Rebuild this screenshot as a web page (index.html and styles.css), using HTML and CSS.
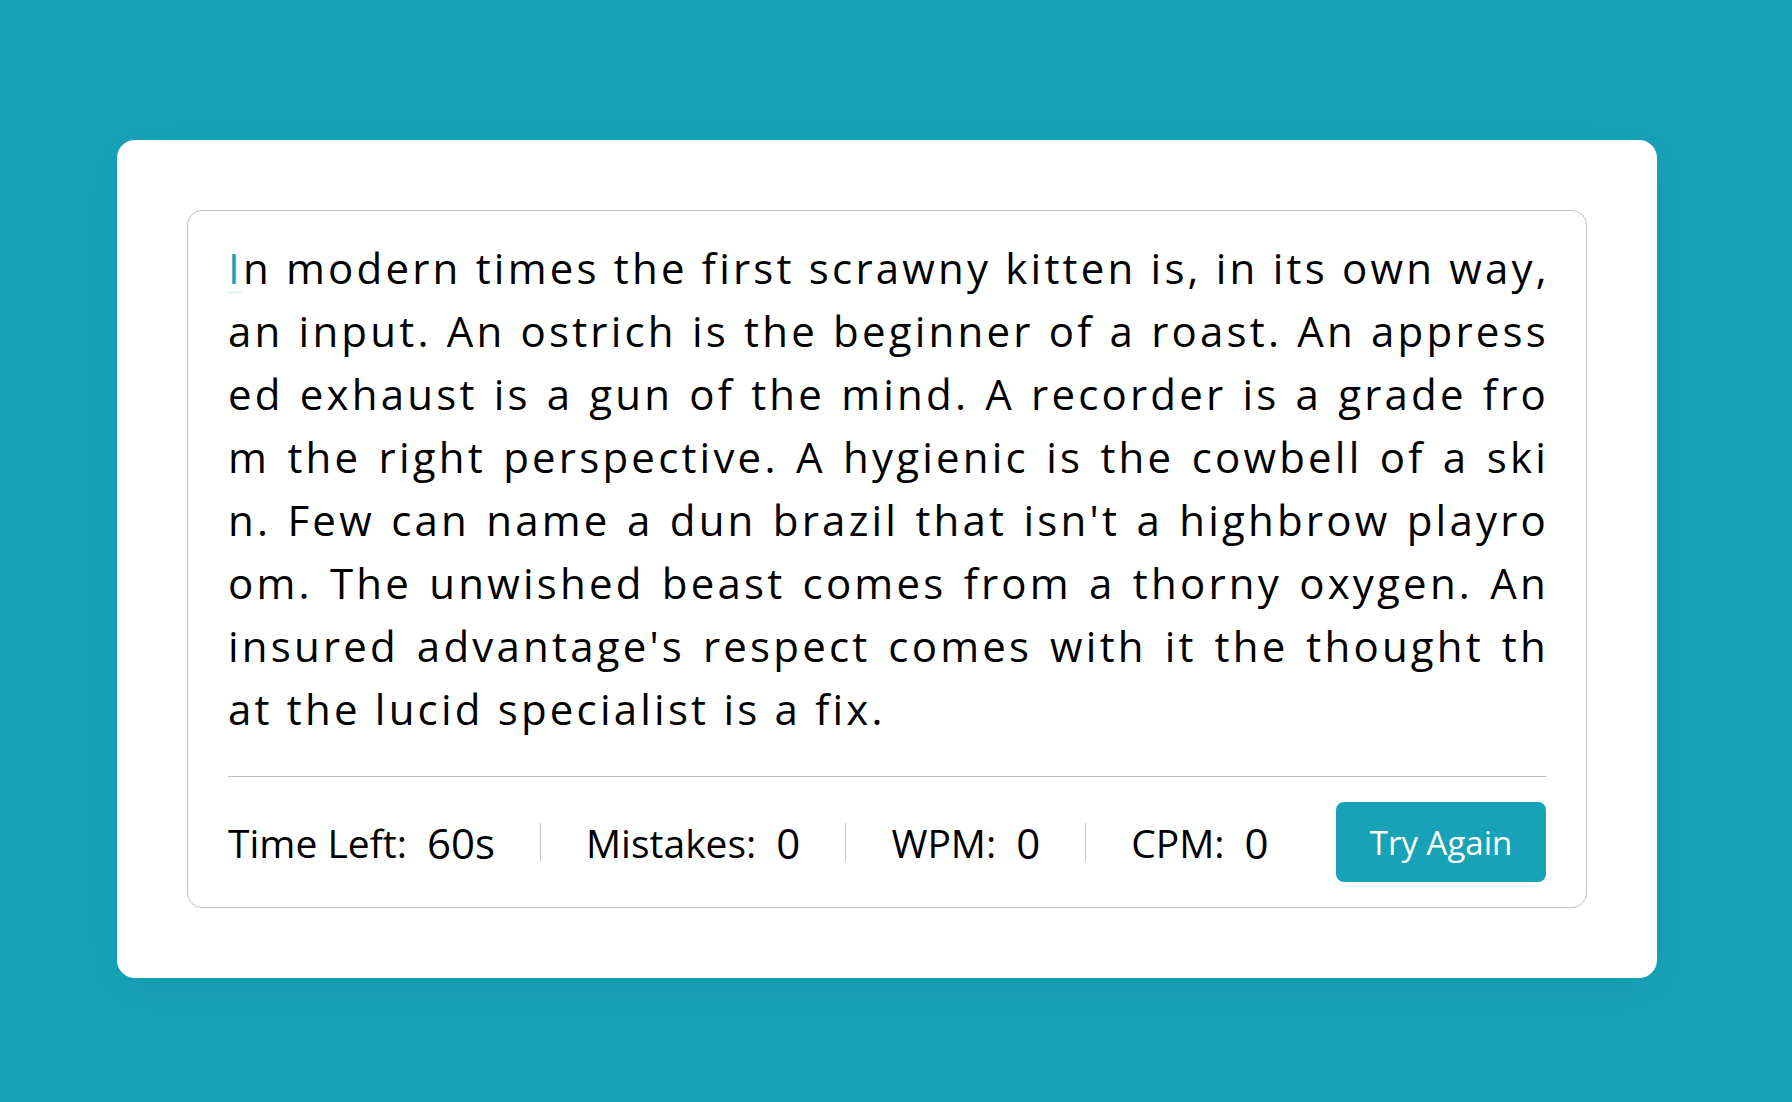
FILE: index.html
```html
<!DOCTYPE html>
<html lang="en">
<head>
<meta charset="utf-8">
<title>Typing Speed Test</title>
<link rel="stylesheet" href="styles.css">
</head>
<body>
<div class="page">
  <div class="card">
    <div class="test-box">
      <div class="typing-text">
        <div class="line"><span class="char active">I</span>n modern times the first scrawny kitten is, in its own way,</div>
        <div class="line">an input. An ostrich is the beginner of a roast. An appress</div>
        <div class="line">ed exhaust is a gun of the mind. A recorder is a grade fro</div>
        <div class="line">m the right perspective. A hygienic is the cowbell of a ski</div>
        <div class="line">n. Few can name a dun brazil that isn't a highbrow playro</div>
        <div class="line">om. The unwished beast comes from a thorny oxygen. An</div>
        <div class="line">insured advantage's respect comes with it the thought th</div>
        <div class="line last">at the lucid specialist is a fix.</div>
      </div>
      <div class="content">
        <ul class="result-details">
          <li class="stat"><span class="label">Time Left:</span><b class="value">60s</b></li>
          <li class="stat"><span class="label">Mistakes:</span><b class="value">0</b></li>
          <li class="stat"><span class="label">WPM:</span><b class="value">0</b></li>
          <li class="stat"><span class="label">CPM:</span><b class="value">0</b></li>
        </ul>
        <button class="try-btn">Try Again</button>
      </div>
    </div>
  </div>
</div>
</body>
</html>
```
FILE: styles.css
```css
* {
  box-sizing: border-box;
}

html, body {
  margin: 0;
  padding: 0;
}

body {
  background: #17a2b8;
  font-family: "Open Sans", "Noto Sans", sans-serif;
  color: #000;
}

.page {
  min-height: 100vh;
  padding: 140px 0 124px 117px;
}

.card {
  width: 1540px;
  background: #fff;
  border-radius: 18px;
  padding: 70px;
  box-shadow: 0 10px 45px rgba(0, 0, 0, 0.05);
}

.test-box {
  border: 1px solid #bfbfbf;
  border-radius: 15px;
  padding: 25px 40px;
}

.typing-text {
  font-size: 42px;
  line-height: 63px;
  letter-spacing: 3.2px;
  margin-bottom: 36px;
  color: #000;
}

.line {
  text-align: justify;
  text-align-last: justify;
  white-space: nowrap;
  margin-right: -3px;
}

.line.last {
  text-align-last: left;
}

.char.active {
  color: #17a2b8;
  position: relative;
}

.char.active::after {
  content: "";
  position: absolute;
  left: -1px;
  right: 1px;
  bottom: 2px;
  height: 3px;
  background: #e6f6f8;
}

.content {
  border-top: 1px solid #bfbfbf;
  padding-top: 25px;
  display: flex;
  align-items: center;
  justify-content: space-between;
}

.result-details {
  list-style: none;
  margin: 0;
  padding: 0;
  display: flex;
  align-items: center;
}

.stat {
  display: flex;
  align-items: center;
  height: 39px;
  padding: 0 45px;
  border-right: 1px solid #c4c4c4;
}

.stat:first-child {
  padding-left: 0;
}

.stat:last-child {
  border-right: none;
}

.label {
  font-size: 39px;
  font-weight: 400;
  white-space: nowrap;
}

.value {
  font-size: 42px;
  font-weight: 500;
  margin-left: 20px;
}

.try-btn {
  font-family: "Open Sans", "Noto Sans", sans-serif;
  font-size: 33px;
  color: #fff;
  background: #17a2b8;
  border: none;
  border-radius: 8px;
  width: 210px;
  height: 80px;
  padding: 0;
  cursor: pointer;
}
```
